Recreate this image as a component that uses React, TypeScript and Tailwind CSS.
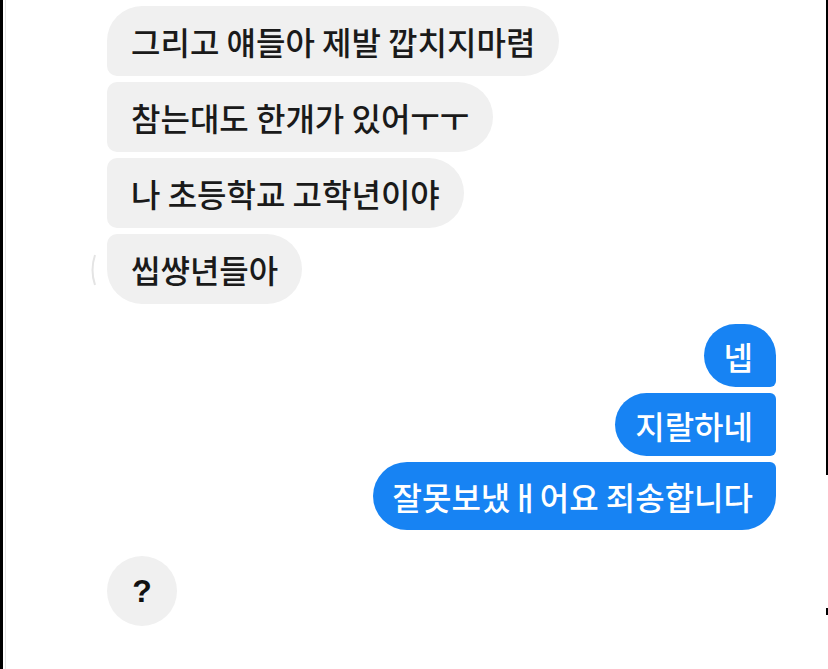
const incoming = [
  { text: '그리고 얘들아 제발 깝치지마렴', shape: 'rounded-l-[35px] rounded-bl-[10px] rounded-r-[35px]' },
  { text: '참는대도 한개가 있어ㅜㅜ', shape: 'rounded-l-[10px] rounded-r-[35px]' },
  { text: '나 초등학교 고학년이야', shape: 'rounded-l-[10px] rounded-r-[35px]' },
  { text: '씹썅년들아', shape: 'rounded-tl-[10px] rounded-bl-[35px] rounded-r-[35px]' },
];

const outgoing = [
  { text: '넵', shape: 'h-[63px] rounded-l-[32px] rounded-tr-[32px] rounded-br-[6px]' },
  { text: '지랄하네', shape: 'h-[63px] rounded-l-[32px] rounded-r-[6px]' },
  { text: '잘못보냈ㅐ어요 죄송합니다', shape: 'h-[68px] rounded-l-[34px] rounded-tr-[6px] rounded-br-[34px]' },
];

export default function App() {
  return (
    <div className="w-[828px] h-[669px] bg-white flex overflow-hidden font-['Noto_Sans_CJK_KR',sans-serif]">
      {/* left frame edge */}
      <div className="w-[3px] bg-black" />
      <div className="w-[2px]" />
      <div className="w-px bg-[#e6e6e6]" />

      <div className="flex-1 flex flex-col pt-[6px]">
        {/* incoming */}
        <div className="flex flex-col items-start gap-[6px] pl-[101px]">
          {incoming.map((m, i) => (
            <div key={i} className="relative">
              {i === incoming.length - 1 && (
                <svg className="absolute -left-[18px] top-[20px]" width="8" height="32" viewBox="0 0 8 32">
                  <path d="M6 1 Q1 16 6 31" stroke="#e4e4e4" strokeWidth="2" fill="none" />
                </svg>
              )}
              <div
                className={`h-[70px] px-6 flex items-center bg-[#f0f0f0] text-[#1a1a1a] text-[32px] font-medium leading-none ${m.shape}`}
              >
                {m.text}
              </div>
            </div>
          ))}
        </div>

        {/* outgoing */}
        <div className="mt-[20px] flex flex-col items-end gap-[6px] pr-[50px]">
          {outgoing.map((m, i) => (
            <div
              key={i}
              className={`pl-[20px] pr-[23px] flex items-center bg-[#1783f3] text-white text-[32px] font-medium leading-none ${m.shape}`}
            >
              {m.text}
            </div>
          ))}
        </div>

        {/* reply */}
        <div className="mt-[26px] pl-[101px]">
          <div className="w-[70px] h-[70px] rounded-full bg-[#f0f0f0] flex items-center justify-center text-[32px] font-bold text-[#111] font-['Liberation_Sans',sans-serif]">
            ?
          </div>
        </div>
      </div>

      {/* right frame edge */}
      <div className="w-[2px] flex flex-col">
        <div className="h-[475px] bg-black" />
        <div className="h-[133px]" />
        <div className="h-[7px] bg-black" />
      </div>
    </div>
  );
}
